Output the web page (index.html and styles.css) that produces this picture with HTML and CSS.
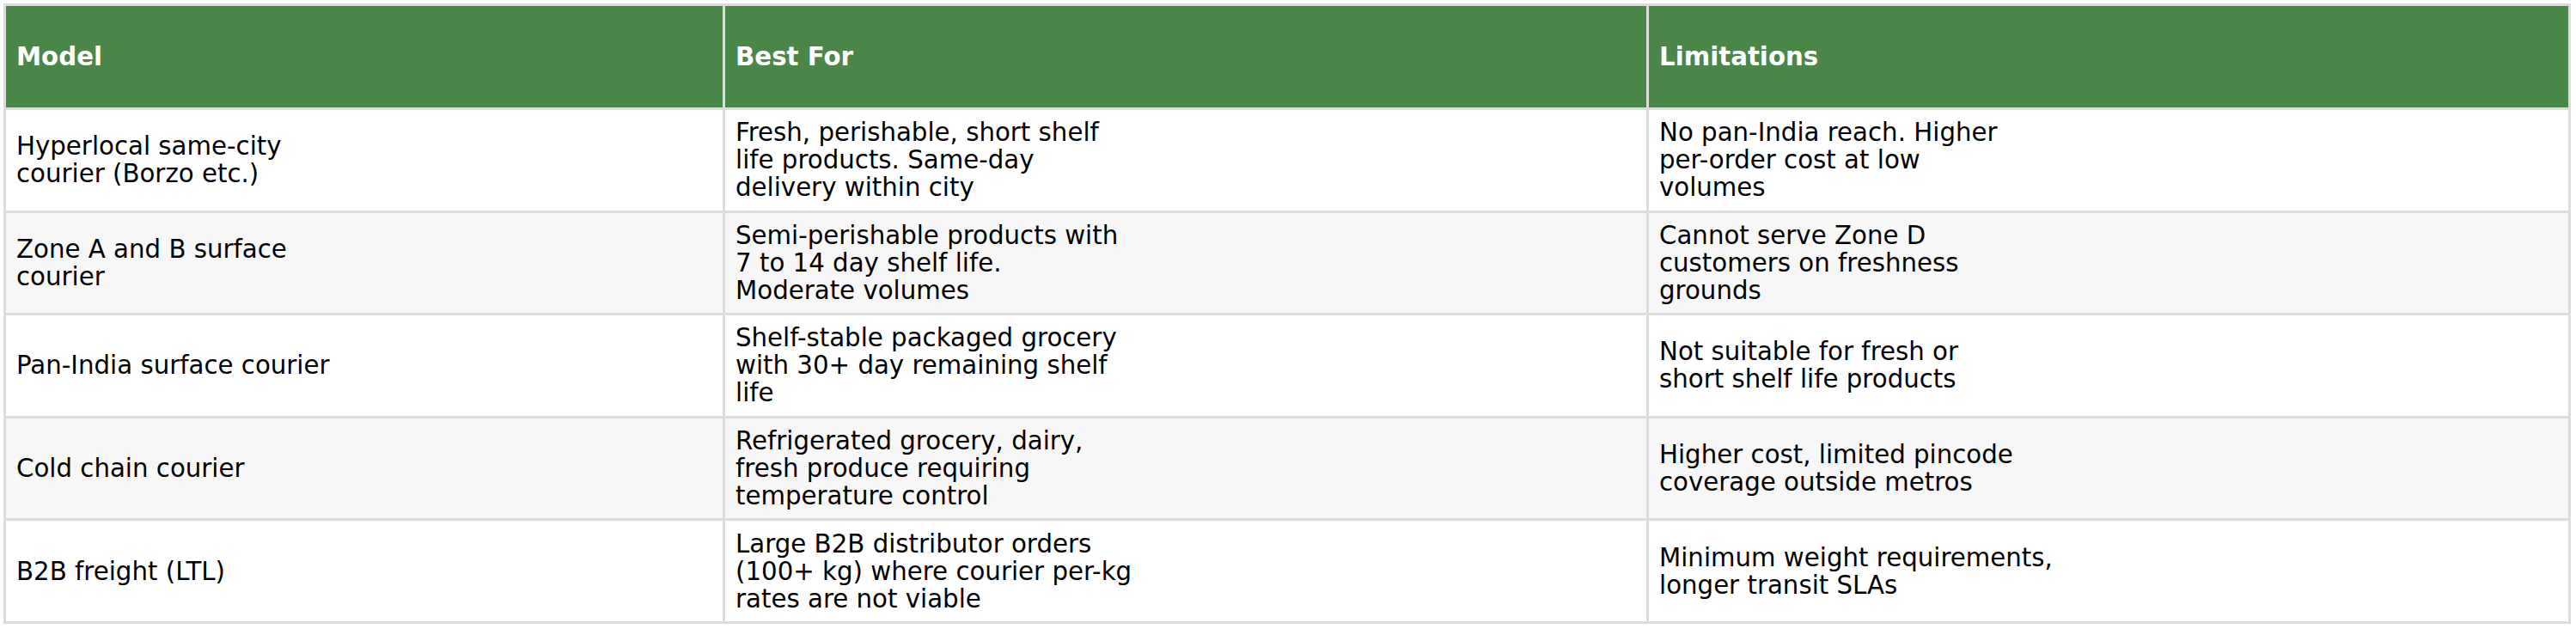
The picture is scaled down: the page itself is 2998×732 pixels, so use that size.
FILE: index.html
```
<!DOCTYPE html>
<html lang="en">
<head>
<meta charset="utf-8">
<title>Shipping models</title>
<link rel="stylesheet" href="styles.css">
</head>
<body>
<table class="models">
  <thead>
    <tr>
      <th class="col-model">Model</th>
      <th class="col-best">Best For</th>
      <th class="col-limit">Limitations</th>
    </tr>
  </thead>
  <tbody>
    <tr>
      <td>Hyperlocal same-city<br>courier (Borzo etc.)</td>
      <td>Fresh, perishable, short shelf<br>life products. Same-day<br>delivery within city</td>
      <td>No pan-India reach. Higher<br>per-order cost at low<br>volumes</td>
    </tr>
    <tr class="alt">
      <td>Zone A and B surface<br>courier</td>
      <td>Semi-perishable products with<br>7 to 14 day shelf life.<br>Moderate volumes</td>
      <td>Cannot serve Zone D<br>customers on freshness<br>grounds</td>
    </tr>
    <tr>
      <td>Pan-India surface courier</td>
      <td>Shelf-stable packaged grocery<br>with 30+ day remaining shelf<br>life</td>
      <td>Not suitable for fresh or<br>short shelf life products</td>
    </tr>
    <tr class="alt">
      <td>Cold chain courier</td>
      <td>Refrigerated grocery, dairy,<br>fresh produce requiring<br>temperature control</td>
      <td>Higher cost, limited pincode<br>coverage outside metros</td>
    </tr>
    <tr>
      <td>B2B freight (LTL)</td>
      <td>Large B2B distributor orders<br>(100+ kg) where courier per-kg<br>rates are not viable</td>
      <td>Minimum weight requirements,<br>longer transit SLAs</td>
    </tr>
  </tbody>
</table>
</body>
</html>
```
FILE: styles.css
```
html, body {
  margin: 0;
  background: #ffffff;
}

body {
  padding: 4px;
  font-family: "DejaVu Sans", "Liberation Sans", sans-serif;
  font-size: 29.25px;
  line-height: 32px;
  color: #000000;
}

.models {
  width: 2988px;
  table-layout: fixed;
  border-collapse: separate;
  border-spacing: 0;
  border-top: 3px solid #dcdcdc;
  border-left: 3px solid #dcdcdc;
}

.models th,
.models td {
  box-sizing: border-box;
  border-right: 3px solid #dcdcdc;
  border-bottom: 3px solid #dcdcdc;
  padding: 0 12px;
  text-align: left;
  vertical-align: middle;
}

.models th {
  height: 121px;
  background: #4a8647;
  color: #ffffff;
  font-weight: bold;
}

.models td {
  height: 119.6px;
  background: #ffffff;
}

.models tr.alt td {
  background: #f7f7f7;
}

.col-model {
  width: 837px;
}

.col-best {
  width: 1075px;
}
```
